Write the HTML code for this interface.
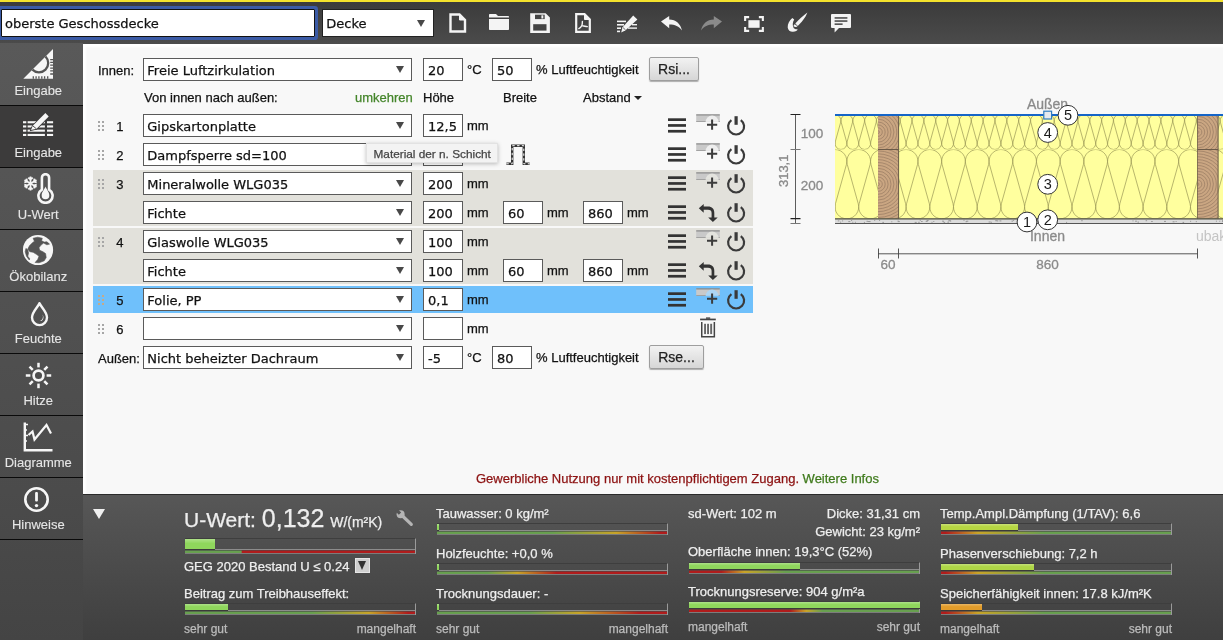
<!DOCTYPE html>
<html lang="de">
<head>
<meta charset="utf-8">
<title>U-Wert Rechner</title>
<style>
*{box-sizing:border-box;}
html,body{margin:0;padding:0;}
body{width:1223px;height:640px;overflow:hidden;position:relative;background:#f8f8f8;font-family:"Liberation Sans",sans-serif;font-size:13px;color:#111;}
.abs,.sel,.num,.lbl,.btn,.bl,.bs,.sitem,.rowbg,svg{position:absolute;}
#app{-webkit-text-stroke:0.250px;position:absolute;left:0;top:0;width:1223px;height:640px;overflow:hidden;will-change:transform;}
#yellow{left:0;top:0;width:1223px;height:2px;background:#f4e22c;}
#topbar{left:0;top:2px;width:1223px;height:42px;background:linear-gradient(#3b3b3b,#4b4b4b);}
.dv{font-family:"DejaVu Sans","Liberation Sans",sans-serif;}
#title{left:1px;top:9px;width:314px;height:28px;background:#fff;border:1px solid #111;box-shadow:0 0 0 3px #3b5ba6;border-radius:1px;}
#title span{position:absolute;left:3px;top:5px;font-size:13px;line-height:17px;color:#111;}
.sel{background:#fff;border:1px solid #5a5a5a;height:23px;width:269px;left:143px;font-family:"DejaVu Sans","Liberation Sans",sans-serif;font-size:13px;line-height:23px;padding-left:3.300px;color:#111;white-space:nowrap;overflow:hidden;}
.sel i{position:absolute;right:7.5px;top:7px;width:0;height:0;border-left:4.300px solid transparent;border-right:4.300px solid transparent;border-top:7.600px solid #484848;}
.num{background:#fff;border:1px solid #5a5a5a;height:23px;width:40px;font-family:"DejaVu Sans","Liberation Sans",sans-serif;font-size:13px;line-height:23px;padding-left:4px;color:#111;white-space:nowrap;}
.lbl{font-size:13px;line-height:15px;white-space:nowrap;color:#111;}
#side{left:0;top:43px;width:83px;height:597px;background:linear-gradient(#595959,#4b4b4b 75%,#444);}
.sitem{left:0;width:83px;height:63px;background:transparent;border-bottom:1px solid #0a0a0a;color:#e6e6e6;-webkit-text-stroke:0.100px;text-align:center;font-size:13px;}
.sitem.act{background:#3c3b3b;}
.sitem span{position:absolute;left:0;width:76.500px;top:40px;line-height:16px;}
.rowbg{left:93px;width:660px;}
.btn{height:23.500px;border:1px solid #9e9e9e;border-radius:2px;background:linear-gradient(#f2f2f2,#d6d6d6);font-size:14px;line-height:22px;text-align:center;color:#222;box-shadow:0 1px 1px rgba(0,0,0,.3);}
#bottom{left:83px;top:494px;width:1140px;height:146px;background:linear-gradient(#575757,#3f3f3f);border-top:1px solid #2a2a2a;}
.bl{font-size:13px;color:#eee;white-space:nowrap;line-height:16px;}
.bs{font-size:12px;color:#bbb;white-space:nowrap;line-height:14px;}
.bar{position:absolute;border-top:1px solid #3e3e3e;border-right:1px solid #9a9a9a;}
.bar b{position:absolute;left:0;top:0;display:block;border-bottom:1px solid #3a3a3a;box-sizing:content-box;background-image:linear-gradient(rgba(255,255,255,.28),rgba(255,255,255,0) 45%);}
.bar u{position:absolute;left:0;right:0;bottom:1px;height:3px;display:block;}
.bar s{position:absolute;left:0;right:0;bottom:4px;height:1px;background:#8c8c8c;display:block;}
.bar em{position:absolute;left:0;right:0;bottom:0;height:1px;background:#7c7c7c;display:block;}
</style>
</head>
<body>
<div id="app">
<div id="yellow" class="abs"></div>
<div id="topbar" class="abs"></div>
<div class="abs" style="left:83px;top:44px;width:1140px;height:450px;box-shadow:inset 3px 3px 2px #fff"></div>
<div id="title" class="abs dv"><span>oberste Geschossdecke</span></div>
<div class="sel" style="left:322px;top:9px;width:112px;height:28px;line-height:27px;border-color:#222;">Decke<i style="top:9.500px;right:8px"></i></div>
<svg style="left:449px;top:13px" width="18" height="20" viewBox="0 0 18 20" ><path d="M1.5 1.5H10.5L16 7V18.5H1.5Z" fill="none" stroke="#f4f4f4" stroke-width="2.4" stroke-linejoin="miter"/><path d="M10.500 1.500V7H16Z" fill="#f4f4f4" stroke="#f4f4f4" stroke-width="1"/></svg>
<svg style="left:489px;top:14px" width="20" height="16" viewBox="0 0 20 16" ><path d="M0 0.8Q0 0 .8 0H7L9 2H19.2Q20 2 20 2.8V3.6H0Z" fill="#f4f4f4"/><path d="M0 5H20V15.2Q20 16 19.2 16H.8Q0 16 0 15.2Z" fill="#f4f4f4"/></svg>
<svg style="left:530px;top:13px" width="20" height="20" viewBox="0 0 20 20" ><path d="M0.200 0.300H15.600L19.900 4.600V19.900H0.200Z" fill="#f4f4f4"/><rect x="5" y="1.700" width="9.700" height="4.400" fill="#454545"/><rect x="11.400" y="2.300" width="1.900" height="3.200" fill="#f4f4f4"/><rect x="3.200" y="11.200" width="13.300" height="6.400" fill="#454545"/></svg>
<svg style="left:575px;top:13px" width="16" height="20" viewBox="0 0 16 20" ><path d="M1.2 1.2H9.5L14.8 6.5V18.8H1.2Z" fill="none" stroke="#f4f4f4" stroke-width="2.2"/><path d="M9.500 1.200V6.500H14.800Z" fill="#f4f4f4" stroke="#f4f4f4" stroke-width="1"/><path d="M7.400 8.400C7.400 10.500 7.200 11.500 6.800 12.600M6.800 12.600C6 14 5 15 3.800 15.600M6.800 12.600C8.500 13 10.500 13.300 12.300 13.600" fill="none" stroke="#f4f4f4" stroke-width="1.400" stroke-linecap="round"/></svg>
<svg style="left:616px;top:15px" width="22" height="18" viewBox="0 0 22 18" ><g fill="#f4f4f4"><rect x="1" y="5.6" width="9" height="1.6"/><rect x="1" y="9" width="7" height="1.6"/><rect x="1" y="12.4" width="4" height="1.6"/><rect x="1" y="15.6" width="3" height="1.6"/><rect x="12" y="12.4" width="9" height="1.4"/><rect x="16" y="9" width="5" height="1.4"/><path d="M17.2 0.4L21.4 4.4L9.6 15.2L5.2 17.4L6.4 12.4Z"/></g><path d="M7 12.6L9.6 15" stroke="#444" stroke-width=".8"/></svg>
<svg style="left:661px;top:16px" width="21" height="15" viewBox="0 0 21 15" ><path d="M0 5.6L8.2 0V3.4C15 3.6 19.6 7.6 21 14.6C18 10.4 14 8.6 8.2 8.6V12.2Z" fill="#f4f4f4"/></svg>
<svg style="left:701px;top:16px" width="21" height="15" viewBox="0 0 21 15" ><path transform="translate(21,0) scale(-1,1)" d="M0 5.6L8.2 0V3.4C15 3.6 19.6 7.6 21 14.6C18 10.4 14 8.6 8.2 8.6V12.2Z" fill="#8a8a8a"/></svg>
<svg style="left:744px;top:16px" width="20" height="16" viewBox="0 0 21 16" preserveAspectRatio="none"><rect x="4.6" y="4.2" width="11.8" height="7.6" fill="#f4f4f4"/><path d="M1.2 5V1.2H5.4M15.6 1.2H19.8V5M19.8 11V14.8H15.6M5.4 14.8H1.2V11" fill="none" stroke="#f4f4f4" stroke-width="2.2"/></svg>
<svg style="left:787px;top:12px" width="21" height="21" viewBox="0 0 21 21" ><path d="M20.400 0.600C16.500 3.500 11.200 8.300 8.300 11.500L10.800 13.900C14.400 10.800 18.600 5.400 20.400 0.600Z" fill="#f4f4f4"/><path d="M7.800 12.200C6.800 12.600 6.400 13.600 6.800 14.600C8.400 15.200 10 14.800 10.400 14.200Z" fill="#f4f4f4"/><path d="M5.300 6.100C2.500 8.500 0.500 12 0.700 15.500C1 18.500 3.500 20 6 19.800C8.500 19.600 10.500 18.500 10.600 17.200C9 17.600 7 16.800 6.300 15.200C5.400 13 5.600 10 7.200 7.600Z" fill="#f4f4f4"/></svg>
<svg style="left:831px;top:14px" width="20" height="19" viewBox="0 0 20 19" ><path d="M1 0H19Q20 0 20 1V13Q20 14 19 14H8L3.6 18.6V14H1Q0 14 0 13V1Q0 0 1 0Z" fill="#f4f4f4"/><g fill="#444"><rect x="3.6" y="3.2" width="12.8" height="1.5"/><rect x="3.6" y="6.3" width="12.8" height="1.5"/><rect x="3.6" y="9.4" width="8" height="1.5"/></g></svg>
<div id="side" class="abs"></div>
<div class="sitem" style="top:43px;height:63px"><div class="abs" style="left:0;top:0px"><svg style="left:23px;top:6px" width="31" height="31" viewBox="0 0 31 31" ><path d="M30 0V29.700H0.300Z" fill="#f6f6f6"/><path d="M9.400 20.600A9.260 9.260 0 0 0 22.500 7.500" fill="none" stroke="#555" stroke-width="2.300"/><g stroke="#555" stroke-width="1.300"><path d="M27.200 10.600H30M27.200 13.400H30M27.200 16.200H30M27.200 19.100H30M27.200 21.900H30M27.200 25H30"/><path d="M10.300 27.200V29.700M13.100 27.200V29.700M15.900 27.200V29.700M18.800 27.200V29.700M21.600 27.200V29.700M24.700 27.200V29.700"/></g></svg><span>Eingabe</span></div></div>
<div class="sitem act" style="top:106px;height:62px"><div class="abs" style="left:0;top:-1px"><svg style="left:22px;top:7px" width="32" height="25" viewBox="0 0 32 25" ><g fill="#f6f6f6"><rect x="1" y="9.2" width="3.300" height="2.100"/><rect x="5.600" y="9.2" width="17.300" height="2.100"/><rect x="25" y="9.2" width="6.100" height="2.100"/><rect x="1" y="13.4" width="3.300" height="2.100"/><rect x="5.600" y="13.4" width="17.300" height="2.100"/><rect x="25" y="13.4" width="6.100" height="2.100"/><rect x="1" y="17.6" width="3.300" height="2.100"/><rect x="5.600" y="17.6" width="17.300" height="2.100"/><rect x="25" y="17.6" width="6.100" height="2.100"/><rect x="1" y="21.9" width="3.300" height="2.100"/><rect x="5.600" y="21.9" width="17.300" height="2.100"/><rect x="25" y="21.9" width="6.100" height="2.100"/><path d="M23.400 1.100L26.700 4.400L14.650 16.700L9 18.100L10.800 13.700Z" stroke="#3c3b3b" stroke-width="1.600"/><path d="M23.400 1.100L26.700 4.400L14.650 16.700L9 18.100L10.800 13.700Z"/></g><path d="M11 14L14.400 16.800" stroke="#3c3b3b" stroke-width=".9" fill="none"/></svg><span>Eingabe</span></div></div>
<div class="sitem" style="top:168px;height:62px"><div class="abs" style="left:0;top:-1px"><svg style="left:23px;top:9px" width="15" height="15" viewBox="0 0 15 15" ><g transform="rotate(0 7.5 7.5)"><path d="M7.5 0.6V7.5M5.3 1.6L7.5 3.6L9.7 1.6" fill="none" stroke="#f6f6f6" stroke-width="1.800"/></g><g transform="rotate(60 7.5 7.5)"><path d="M7.5 0.6V7.5M5.3 1.6L7.5 3.6L9.7 1.6" fill="none" stroke="#f6f6f6" stroke-width="1.800"/></g><g transform="rotate(120 7.5 7.5)"><path d="M7.5 0.6V7.5M5.3 1.6L7.5 3.6L9.7 1.6" fill="none" stroke="#f6f6f6" stroke-width="1.800"/></g><g transform="rotate(180 7.5 7.5)"><path d="M7.5 0.6V7.5M5.3 1.6L7.5 3.6L9.7 1.6" fill="none" stroke="#f6f6f6" stroke-width="1.800"/></g><g transform="rotate(240 7.5 7.5)"><path d="M7.5 0.6V7.5M5.3 1.6L7.5 3.6L9.7 1.6" fill="none" stroke="#f6f6f6" stroke-width="1.800"/></g><g transform="rotate(300 7.5 7.5)"><path d="M7.5 0.6V7.5M5.3 1.6L7.5 3.6L9.7 1.6" fill="none" stroke="#f6f6f6" stroke-width="1.800"/></g></svg><svg style="left:37px;top:6px" width="17" height="31" viewBox="0 0 17 31" ><path d="M4.900 4.800A3.600 3.600 0 0 1 12.100 4.800V16.600A7.100 7.100 0 1 1 4.900 16.600Z" fill="none" stroke="#f6f6f6" stroke-width="2.600"/><path d="M8.500 13.500C9.300 16.500 12.300 18.500 12.300 22.500A3.800 3.800 0 0 1 4.700 22.500C4.700 18.500 7.700 16.500 8.500 13.500Z" fill="#f6f6f6"/></svg><span>U-Wert</span></div></div>
<div class="sitem" style="top:230px;height:62px"><div class="abs" style="left:0;top:-1px"><svg style="left:23px;top:5px" width="31" height="33" viewBox="0 0 31 33" ><circle cx="15" cy="16" r="15.100" fill="#f6f6f6"/><path d="M10.1 4.2L14.7 3.2L19.3 4.2L18.6 6.8L21.2 8.1L23.9 7.8L26.5 10.1L23.9 10.8L20.6 9.1L18.0 11.1L16.0 13.7L16.7 16.3L19.9 17.7L22.6 19.6L23.2 23.6L21.2 26.8L16.0 28.8L12.1 28.5L14.7 25.5L16.0 22.2L13.4 20.3L10.1 18.3L6.8 17.7L4.8 15.0L6.5 11.7L9.1 9.1L11.4 7.2ZM2.9 14.4L4.8 15.7L5.5 19.0L4.8 22.2L6.8 24.9L6.2 25.9L3.5 22.2L2.2 17.7Z" fill="#545454" stroke="#545454" stroke-width=".6" stroke-linejoin="round"/></svg><span>Ökobilanz</span></div></div>
<div class="sitem" style="top:292px;height:62px"><div class="abs" style="left:0;top:-1px"><svg style="left:30px;top:10px" width="19" height="26" viewBox="0 0 19 26" ><path d="M9.5 2.2C7.6 6.6 2 10.800 2 16.600A7.500 7.500 0 0 0 17 16.600C17 10.800 11.400 6.600 9.500 2.200Z" fill="none" stroke="#f6f6f6" stroke-width="2.400" stroke-linejoin="round"/><path d="M12.6 13.500C13.600 16.500 12.600 19 10 20C12.800 20.400 14.600 17 12.600 13.500Z" fill="#f6f6f6"/></svg><span>Feuchte</span></div></div>
<div class="sitem" style="top:354px;height:62px"><div class="abs" style="left:0;top:-1px"><svg style="left:25px;top:9px" width="27" height="27" viewBox="0 0 27 27" ><circle cx="13.500" cy="13.500" r="4.900" fill="none" stroke="#f6f6f6" stroke-width="2.700"/><path transform="rotate(0 13.5 13.5)" d="M13.5 0.800V5.400" stroke="#f6f6f6" stroke-width="2.500" fill="none"/><path transform="rotate(45 13.5 13.5)" d="M13.5 0.800V5.400" stroke="#f6f6f6" stroke-width="2.500" fill="none"/><path transform="rotate(90 13.5 13.5)" d="M13.5 0.800V5.400" stroke="#f6f6f6" stroke-width="2.500" fill="none"/><path transform="rotate(135 13.5 13.5)" d="M13.5 0.800V5.400" stroke="#f6f6f6" stroke-width="2.500" fill="none"/><path transform="rotate(180 13.5 13.5)" d="M13.5 0.800V5.400" stroke="#f6f6f6" stroke-width="2.500" fill="none"/><path transform="rotate(225 13.5 13.5)" d="M13.5 0.800V5.400" stroke="#f6f6f6" stroke-width="2.500" fill="none"/><path transform="rotate(270 13.5 13.5)" d="M13.5 0.800V5.400" stroke="#f6f6f6" stroke-width="2.500" fill="none"/><path transform="rotate(315 13.5 13.5)" d="M13.5 0.800V5.400" stroke="#f6f6f6" stroke-width="2.500" fill="none"/></svg><span>Hitze</span></div></div>
<div class="sitem" style="top:416px;height:62px"><div class="abs" style="left:0;top:-1px"><svg style="left:23px;top:7px" width="30" height="30" viewBox="0 0 30 30" ><path d="M1.800 0.500V28.200H29.500" fill="none" stroke="#f6f6f6" stroke-width="2.400"/><path d="M1.800 2.500H5M1.800 8H4M1.800 13.500H5M1.800 19H4" stroke="#f6f6f6" stroke-width="1.400"/><path d="M5.500 13L9.500 9.500L11.500 17.500L23.500 3L28 11.500" fill="none" stroke="#f6f6f6" stroke-width="2.200" stroke-linejoin="miter"/></svg><span>Diagramme</span></div></div>
<div class="sitem" style="top:478px;height:62px"><div class="abs" style="left:0;top:-1px"><svg style="left:23px;top:9px" width="27" height="27" viewBox="0 0 27 27" ><circle cx="13.500" cy="13.500" r="11.200" fill="none" stroke="#f6f6f6" stroke-width="2.600"/><rect x="12.100" y="6" width="2.800" height="9.500" rx="1" fill="#f6f6f6"/><circle cx="13.500" cy="19.600" r="1.700" fill="#f6f6f6"/></svg><span>Hinweise</span></div></div>
<div class="rowbg" style="top:170px;height:56px;background:#e2e1db"></div>
<div class="rowbg" style="top:228px;height:56px;background:#e2e1db"></div>
<div class="rowbg" style="top:286px;height:27px;background:#6fc0fb"></div>
<div class="lbl" style="left:98px;top:63.0px;">Innen:</div>
<div class="sel" style="top:58.0px">Freie Luftzirkulation<i></i></div>
<div class="num" style="left:423px;top:58.0px">20</div>
<div class="lbl" style="left:467px;top:62.0px;">°C</div>
<div class="num" style="left:492px;top:58.0px">50</div>
<div class="lbl" style="left:536px;top:62.0px;">% Luftfeuchtigkeit</div>
<div class="btn" style="left:649px;top:57.0px;width:50px">Rsi...</div>
<div class="lbl" style="left:144px;top:90.0px;">Von innen nach außen:</div>
<div class="lbl" style="left:355px;top:90.0px;color:#44852a">umkehren</div>
<div class="lbl" style="left:423px;top:90.0px;">Höhe</div>
<div class="lbl" style="left:503px;top:90.0px;">Breite</div>
<div class="lbl" style="left:583px;top:90.0px;">Abstand</div>
<div class="abs" style="left:634px;top:96px;width:0;height:0;border-left:4px solid transparent;border-right:4px solid transparent;border-top:4px solid #222"></div>
<svg style="left:98px;top:121.0px" width="6" height="10" viewBox="0 0 6 10" ><rect x="0" y="0" width="2" height="2" fill="#a6a6a6"/><rect x="0" y="4" width="2" height="2" fill="#a6a6a6"/><rect x="0" y="8" width="2" height="2" fill="#a6a6a6"/><rect x="4" y="0" width="2" height="2" fill="#a6a6a6"/><rect x="4" y="4" width="2" height="2" fill="#a6a6a6"/><rect x="4" y="8" width="2" height="2" fill="#a6a6a6"/></svg>
<div class="lbl" style="left:116.200px;top:119.0px;">1</div>
<div class="sel" style="top:114.0px">Gipskartonplatte<i></i></div>
<div class="num" style="left:423px;top:114.0px">12,5</div>
<div class="lbl" style="left:467px;top:118.0px;">mm</div>
<svg style="left:668px;top:118.0px" width="18" height="15" viewBox="0 0 18 15" ><rect x="0" y="0.300" width="18" height="2.700" fill="#333"/><rect x="0" y="6.100" width="18" height="2.700" fill="#333"/><rect x="0" y="11.900" width="18" height="2.700" fill="#333"/></svg>
<svg style="left:696px;top:113.5px" width="25" height="22" viewBox="0 0 25 22" ><rect x="0.200" y="0.600" width="23.600" height="7.300" fill="#c9c9c9"/><rect x="0.200" y="0.400" width="23.600" height="1" fill="#7c7c7c"/><rect x="0.200" y="7.300" width="23.600" height=".7" fill="#909090"/><path d="M9.600 8.100A6.500 6.500 0 0 1 22.600 8.100Z" fill="#f4f4f4" opacity=".85"/><path d="M16.100 5.500V15.800M11 10.650H21.200" stroke="#3c3c3c" stroke-width="2" fill="none"/></svg>
<svg style="left:726px;top:114.5px" width="21" height="23" viewBox="0 0 21 23" ><path d="M5.400 5.030A8 8 0 1 0 14.800 5.030" fill="none" stroke="#3a3a3a" stroke-width="2.200"/><rect x="8.500" y="1.200" width="3.200" height="8.600" fill="#3a3a3a"/></svg>
<svg style="left:98px;top:150.0px" width="6" height="10" viewBox="0 0 6 10" ><rect x="0" y="0" width="2" height="2" fill="#a6a6a6"/><rect x="0" y="4" width="2" height="2" fill="#a6a6a6"/><rect x="0" y="8" width="2" height="2" fill="#a6a6a6"/><rect x="4" y="0" width="2" height="2" fill="#a6a6a6"/><rect x="4" y="4" width="2" height="2" fill="#a6a6a6"/><rect x="4" y="8" width="2" height="2" fill="#a6a6a6"/></svg>
<div class="lbl" style="left:116.200px;top:148.0px;">2</div>
<div class="sel" style="top:143.0px">Dampfsperre sd=100<i></i></div>
<div class="num" style="left:423px;top:143.0px">0,2</div>
<svg style="left:668px;top:147.0px" width="18" height="15" viewBox="0 0 18 15" ><rect x="0" y="0.300" width="18" height="2.700" fill="#333"/><rect x="0" y="6.100" width="18" height="2.700" fill="#333"/><rect x="0" y="11.900" width="18" height="2.700" fill="#333"/></svg>
<svg style="left:696px;top:142.5px" width="25" height="22" viewBox="0 0 25 22" ><rect x="0.200" y="0.600" width="23.600" height="7.300" fill="#c9c9c9"/><rect x="0.200" y="0.400" width="23.600" height="1" fill="#7c7c7c"/><rect x="0.200" y="7.300" width="23.600" height=".7" fill="#909090"/><path d="M9.600 8.100A6.500 6.500 0 0 1 22.600 8.100Z" fill="#f4f4f4" opacity=".85"/><path d="M16.100 5.500V15.800M11 10.650H21.200" stroke="#3c3c3c" stroke-width="2" fill="none"/></svg>
<svg style="left:726px;top:143.5px" width="21" height="23" viewBox="0 0 21 23" ><path d="M5.400 5.030A8 8 0 1 0 14.800 5.030" fill="none" stroke="#3a3a3a" stroke-width="2.200"/><rect x="8.500" y="1.200" width="3.200" height="8.600" fill="#3a3a3a"/></svg>
<svg style="left:98px;top:179.0px" width="6" height="10" viewBox="0 0 6 10" ><rect x="0" y="0" width="2" height="2" fill="#a6a6a6"/><rect x="0" y="4" width="2" height="2" fill="#a6a6a6"/><rect x="0" y="8" width="2" height="2" fill="#a6a6a6"/><rect x="4" y="0" width="2" height="2" fill="#a6a6a6"/><rect x="4" y="4" width="2" height="2" fill="#a6a6a6"/><rect x="4" y="8" width="2" height="2" fill="#a6a6a6"/></svg>
<div class="lbl" style="left:116.200px;top:177.0px;">3</div>
<div class="sel" style="top:172.0px">Mineralwolle WLG035<i></i></div>
<div class="num" style="left:423px;top:172.0px">200</div>
<div class="lbl" style="left:467px;top:176.0px;">mm</div>
<svg style="left:668px;top:176.0px" width="18" height="15" viewBox="0 0 18 15" ><rect x="0" y="0.300" width="18" height="2.700" fill="#333"/><rect x="0" y="6.100" width="18" height="2.700" fill="#333"/><rect x="0" y="11.900" width="18" height="2.700" fill="#333"/></svg>
<svg style="left:696px;top:171.5px" width="25" height="22" viewBox="0 0 25 22" ><rect x="0.200" y="0.600" width="23.600" height="7.300" fill="#c9c9c9"/><rect x="0.200" y="0.400" width="23.600" height="1" fill="#7c7c7c"/><rect x="0.200" y="7.300" width="23.600" height=".7" fill="#909090"/><path d="M9.600 8.100A6.500 6.500 0 0 1 22.600 8.100Z" fill="#e8e7e2" opacity=".85"/><path d="M16.100 5.500V15.800M11 10.650H21.200" stroke="#3c3c3c" stroke-width="2" fill="none"/></svg>
<svg style="left:726px;top:172.5px" width="21" height="23" viewBox="0 0 21 23" ><path d="M5.400 5.030A8 8 0 1 0 14.800 5.030" fill="none" stroke="#3a3a3a" stroke-width="2.200"/><rect x="8.500" y="1.200" width="3.200" height="8.600" fill="#3a3a3a"/></svg>
<div class="sel" style="top:201.0px">Fichte<i></i></div>
<div class="num" style="left:423px;top:201.0px">200</div>
<div class="lbl" style="left:467px;top:205.0px;">mm</div>
<div class="num" style="left:503px;top:201.0px">60</div>
<div class="lbl" style="left:547px;top:205.0px;">mm</div>
<div class="num" style="left:583px;top:201.0px">860</div>
<div class="lbl" style="left:627px;top:205.0px;">mm</div>
<svg style="left:668px;top:205.0px" width="18" height="15" viewBox="0 0 18 15" ><rect x="0" y="0.300" width="18" height="2.700" fill="#333"/><rect x="0" y="6.100" width="18" height="2.700" fill="#333"/><rect x="0" y="11.900" width="18" height="2.700" fill="#333"/></svg>
<svg style="left:698px;top:203.0px" width="21" height="20" viewBox="0 0 21 20" ><path d="M0.800 5.300L5.700 0.900V3.600H10C14 3.600 16.300 6 16.300 10V14.400H19.700L14.900 19L10.200 14.400H13.600V10C13.600 8 12.400 6.800 10 6.800H5.700V9.700Z" fill="#333"/></svg>
<svg style="left:726px;top:201.5px" width="21" height="23" viewBox="0 0 21 23" ><path d="M5.400 5.030A8 8 0 1 0 14.800 5.030" fill="none" stroke="#3a3a3a" stroke-width="2.200"/><rect x="8.500" y="1.200" width="3.200" height="8.600" fill="#3a3a3a"/></svg>
<svg style="left:98px;top:237.0px" width="6" height="10" viewBox="0 0 6 10" ><rect x="0" y="0" width="2" height="2" fill="#a6a6a6"/><rect x="0" y="4" width="2" height="2" fill="#a6a6a6"/><rect x="0" y="8" width="2" height="2" fill="#a6a6a6"/><rect x="4" y="0" width="2" height="2" fill="#a6a6a6"/><rect x="4" y="4" width="2" height="2" fill="#a6a6a6"/><rect x="4" y="8" width="2" height="2" fill="#a6a6a6"/></svg>
<div class="lbl" style="left:116.200px;top:235.0px;">4</div>
<div class="sel" style="top:230.0px">Glaswolle WLG035<i></i></div>
<div class="num" style="left:423px;top:230.0px">100</div>
<div class="lbl" style="left:467px;top:234.0px;">mm</div>
<svg style="left:668px;top:234.0px" width="18" height="15" viewBox="0 0 18 15" ><rect x="0" y="0.300" width="18" height="2.700" fill="#333"/><rect x="0" y="6.100" width="18" height="2.700" fill="#333"/><rect x="0" y="11.900" width="18" height="2.700" fill="#333"/></svg>
<svg style="left:696px;top:229.5px" width="25" height="22" viewBox="0 0 25 22" ><rect x="0.200" y="0.600" width="23.600" height="7.300" fill="#c9c9c9"/><rect x="0.200" y="0.400" width="23.600" height="1" fill="#7c7c7c"/><rect x="0.200" y="7.300" width="23.600" height=".7" fill="#909090"/><path d="M9.600 8.100A6.500 6.500 0 0 1 22.600 8.100Z" fill="#e8e7e2" opacity=".85"/><path d="M16.100 5.500V15.800M11 10.650H21.200" stroke="#3c3c3c" stroke-width="2" fill="none"/></svg>
<svg style="left:726px;top:230.5px" width="21" height="23" viewBox="0 0 21 23" ><path d="M5.400 5.030A8 8 0 1 0 14.800 5.030" fill="none" stroke="#3a3a3a" stroke-width="2.200"/><rect x="8.500" y="1.200" width="3.200" height="8.600" fill="#3a3a3a"/></svg>
<div class="sel" style="top:259.0px">Fichte<i></i></div>
<div class="num" style="left:423px;top:259.0px">100</div>
<div class="lbl" style="left:467px;top:263.0px;">mm</div>
<div class="num" style="left:503px;top:259.0px">60</div>
<div class="lbl" style="left:547px;top:263.0px;">mm</div>
<div class="num" style="left:583px;top:259.0px">860</div>
<div class="lbl" style="left:627px;top:263.0px;">mm</div>
<svg style="left:668px;top:263.0px" width="18" height="15" viewBox="0 0 18 15" ><rect x="0" y="0.300" width="18" height="2.700" fill="#333"/><rect x="0" y="6.100" width="18" height="2.700" fill="#333"/><rect x="0" y="11.900" width="18" height="2.700" fill="#333"/></svg>
<svg style="left:698px;top:261.0px" width="21" height="20" viewBox="0 0 21 20" ><path d="M0.800 5.300L5.700 0.900V3.600H10C14 3.600 16.300 6 16.300 10V14.400H19.700L14.900 19L10.200 14.400H13.600V10C13.600 8 12.400 6.800 10 6.800H5.700V9.700Z" fill="#333"/></svg>
<svg style="left:726px;top:259.5px" width="21" height="23" viewBox="0 0 21 23" ><path d="M5.400 5.030A8 8 0 1 0 14.800 5.030" fill="none" stroke="#3a3a3a" stroke-width="2.200"/><rect x="8.500" y="1.200" width="3.200" height="8.600" fill="#3a3a3a"/></svg>
<svg style="left:98px;top:295.0px" width="6" height="10" viewBox="0 0 6 10" ><rect x="0" y="0" width="2" height="2" fill="#c6aa88"/><rect x="0" y="4" width="2" height="2" fill="#c6aa88"/><rect x="0" y="8" width="2" height="2" fill="#c6aa88"/><rect x="4" y="0" width="2" height="2" fill="#c6aa88"/><rect x="4" y="4" width="2" height="2" fill="#c6aa88"/><rect x="4" y="8" width="2" height="2" fill="#c6aa88"/></svg>
<div class="lbl" style="left:116.200px;top:293.0px;">5</div>
<div class="sel" style="top:288.0px">Folie, PP<i></i></div>
<div class="num" style="left:423px;top:288.0px">0,1</div>
<div class="lbl" style="left:467px;top:292.0px;">mm</div>
<svg style="left:668px;top:292.0px" width="18" height="15" viewBox="0 0 18 15" ><rect x="0" y="0.300" width="18" height="2.700" fill="#333"/><rect x="0" y="6.100" width="18" height="2.700" fill="#333"/><rect x="0" y="11.900" width="18" height="2.700" fill="#333"/></svg>
<svg style="left:696px;top:287.5px" width="25" height="22" viewBox="0 0 25 22" ><rect x="0.200" y="0.600" width="23.600" height="7.300" fill="#c9c9c9"/><rect x="0.200" y="0.400" width="23.600" height="1" fill="#7c7c7c"/><rect x="0.200" y="7.300" width="23.600" height=".7" fill="#909090"/><path d="M9.600 8.100A6.500 6.500 0 0 1 22.600 8.100Z" fill="#a8d8fc" opacity=".85"/><path d="M16.100 5.500V15.800M11 10.650H21.200" stroke="#3c3c3c" stroke-width="2" fill="none"/></svg>
<svg style="left:726px;top:288.5px" width="21" height="23" viewBox="0 0 21 23" ><path d="M5.400 5.030A8 8 0 1 0 14.800 5.030" fill="none" stroke="#3a3a3a" stroke-width="2.200"/><rect x="8.500" y="1.200" width="3.200" height="8.600" fill="#3a3a3a"/></svg>
<svg style="left:98px;top:324.0px" width="6" height="10" viewBox="0 0 6 10" ><rect x="0" y="0" width="2" height="2" fill="#a6a6a6"/><rect x="0" y="4" width="2" height="2" fill="#a6a6a6"/><rect x="0" y="8" width="2" height="2" fill="#a6a6a6"/><rect x="4" y="0" width="2" height="2" fill="#a6a6a6"/><rect x="4" y="4" width="2" height="2" fill="#a6a6a6"/><rect x="4" y="8" width="2" height="2" fill="#a6a6a6"/></svg>
<div class="lbl" style="left:116.200px;top:322.0px;">6</div>
<div class="sel" style="top:317.0px"><i></i></div>
<div class="num" style="left:423px;top:317.0px"></div>
<div class="lbl" style="left:467px;top:321.0px;">mm</div>
<svg style="left:699px;top:316.5px" width="18" height="22" viewBox="0 0 18 22" ><rect x="1.100" y="1.600" width="15.700" height="1.700" fill="#444"/><rect x="7" y="0.400" width="4.200" height="1.400" fill="#444"/><path d="M2.750 5.100V19.650H15.350V5.100" fill="none" stroke="#444" stroke-width="1.500"/><g fill="#666"><rect x="5.100" y="6.800" width="1.900" height="10.300"/><rect x="8.100" y="6.800" width="1.900" height="10.300"/><rect x="11.200" y="6.800" width="1.900" height="10.300"/></g></svg>
<svg style="left:506px;top:143.5px" width="24" height="22" viewBox="0 0 24 22" ><path d="M0.400 19.800H6.200V1.700H17.800V19.800H23.600" fill="none" stroke="#333" stroke-width="2.400"/><path d="M0.400 19.800H6.200V1.700H17.800V19.800H23.600" fill="none" stroke="#fff" stroke-width="1" stroke-dasharray="2.400 2.400"/></svg>
<div class="abs" style="left:366px;top:143px;width:132px;height:20px;background:#f3f3f3;border:1px solid #e2e2e2;box-shadow:0 1px 4px rgba(0,0,0,.25);font-size:11.800px;line-height:20px;padding-left:6.500px;color:#444;white-space:nowrap">Material der n. Schicht</div>
<div class="lbl" style="left:98px;top:351.0px;">Außen:</div>
<div class="sel" style="top:346.0px">Nicht beheizter Dachraum<i></i></div>
<div class="num" style="left:423px;top:346.0px">-5</div>
<div class="lbl" style="left:467px;top:350.0px;">°C</div>
<div class="num" style="left:492px;top:346.0px">80</div>
<div class="lbl" style="left:536px;top:350.0px;">% Luftfeuchtigkeit</div>
<div class="btn" style="left:649px;top:345.0px;width:55px">Rse...</div>
<div class="lbl" style="left:476px;top:471px;color:#8c1212">Gewerbliche Nutzung nur mit kostenpflichtigem Zugang. <span style="color:#3f7a1c">Weitere Infos</span></div>
<svg style="left:770px;top:88px" width="453" height="192" viewBox="770 88 453 192" font-family="Liberation Sans, sans-serif" stroke-width=".3"><defs><clipPath id="c1"><rect x="835" y="114.6" width="388" height="34.9"/></clipPath><clipPath id="c2"><rect x="835" y="149.5" width="388" height="69.3"/></clipPath></defs><rect x="835" y="114.6" width="388" height="104.20000000000002" fill="#ffff9e"/><path clip-path="url(#c1)" d="M817.44 122.10A5.92 5.92 0 1 1 828.86 122.10L823.36 142.00A5.92 5.92 0 1 0 834.79 142.00L829.29 122.10A5.92 5.92 0 1 1 840.71 122.10L835.21 142.00A5.92 5.92 0 1 0 846.64 142.00L841.14 122.10A5.92 5.92 0 1 1 852.56 122.10L847.06 142.00A5.92 5.92 0 1 0 858.49 142.00L852.99 122.10A5.92 5.92 0 1 1 864.41 122.10L858.91 142.00A5.92 5.92 0 1 0 870.34 142.00L864.84 122.10A5.92 5.92 0 1 1 876.26 122.10L870.76 142.00A5.92 5.92 0 1 0 882.19 142.00L876.69 122.10A5.92 5.92 0 1 1 888.11 122.10L882.61 142.00A5.92 5.92 0 1 0 894.04 142.00L888.54 122.10A5.92 5.92 0 1 1 899.96 122.10L894.46 142.00A5.92 5.92 0 1 0 905.89 142.00L900.39 122.10A5.92 5.92 0 1 1 911.81 122.10L906.31 142.00A5.92 5.92 0 1 0 917.74 142.00L912.24 122.10A5.92 5.92 0 1 1 923.66 122.10L918.16 142.00A5.92 5.92 0 1 0 929.59 142.00L924.09 122.10A5.92 5.92 0 1 1 935.51 122.10L930.01 142.00A5.92 5.92 0 1 0 941.44 142.00L935.94 122.10A5.92 5.92 0 1 1 947.36 122.10L941.86 142.00A5.92 5.92 0 1 0 953.29 142.00L947.79 122.10A5.92 5.92 0 1 1 959.21 122.10L953.71 142.00A5.92 5.92 0 1 0 965.14 142.00L959.64 122.10A5.92 5.92 0 1 1 971.06 122.10L965.56 142.00A5.92 5.92 0 1 0 976.99 142.00L971.49 122.10A5.92 5.92 0 1 1 982.91 122.10L977.41 142.00A5.92 5.92 0 1 0 988.84 142.00L983.34 122.10A5.92 5.92 0 1 1 994.76 122.10L989.26 142.00A5.92 5.92 0 1 0 1000.69 142.00L995.19 122.10A5.92 5.92 0 1 1 1006.61 122.10L1001.11 142.00A5.92 5.92 0 1 0 1012.54 142.00L1007.04 122.10A5.92 5.92 0 1 1 1018.46 122.10L1012.96 142.00A5.92 5.92 0 1 0 1024.39 142.00L1018.89 122.10A5.92 5.92 0 1 1 1030.31 122.10L1024.81 142.00A5.92 5.92 0 1 0 1036.24 142.00L1030.74 122.10A5.92 5.92 0 1 1 1042.16 122.10L1036.66 142.00A5.92 5.92 0 1 0 1048.09 142.00L1042.59 122.10A5.92 5.92 0 1 1 1054.01 122.10L1048.51 142.00A5.92 5.92 0 1 0 1059.94 142.00L1054.44 122.10A5.92 5.92 0 1 1 1065.86 122.10L1060.36 142.00A5.92 5.92 0 1 0 1071.79 142.00L1066.29 122.10A5.92 5.92 0 1 1 1077.71 122.10L1072.21 142.00A5.92 5.92 0 1 0 1083.64 142.00L1078.14 122.10A5.92 5.92 0 1 1 1089.56 122.10L1084.06 142.00A5.92 5.92 0 1 0 1095.49 142.00L1089.99 122.10A5.92 5.92 0 1 1 1101.41 122.10L1095.91 142.00A5.92 5.92 0 1 0 1107.34 142.00L1101.84 122.10A5.92 5.92 0 1 1 1113.26 122.10L1107.76 142.00A5.92 5.92 0 1 0 1119.19 142.00L1113.69 122.10A5.92 5.92 0 1 1 1125.11 122.10L1119.61 142.00A5.92 5.92 0 1 0 1131.04 142.00L1125.54 122.10A5.92 5.92 0 1 1 1136.96 122.10L1131.46 142.00A5.92 5.92 0 1 0 1142.89 142.00L1137.39 122.10A5.92 5.92 0 1 1 1148.81 122.10L1143.31 142.00A5.92 5.92 0 1 0 1154.74 142.00L1149.24 122.10A5.92 5.92 0 1 1 1160.66 122.10L1155.16 142.00A5.92 5.92 0 1 0 1166.59 142.00L1161.09 122.10A5.92 5.92 0 1 1 1172.51 122.10L1167.01 142.00A5.92 5.92 0 1 0 1178.44 142.00L1172.94 122.10A5.92 5.92 0 1 1 1184.36 122.10L1178.86 142.00A5.92 5.92 0 1 0 1190.29 142.00L1184.79 122.10A5.92 5.92 0 1 1 1196.21 122.10L1190.71 142.00A5.92 5.92 0 1 0 1202.14 142.00L1196.64 122.10A5.92 5.92 0 1 1 1208.06 122.10L1202.56 142.00A5.92 5.92 0 1 0 1213.99 142.00L1208.49 122.10A5.92 5.92 0 1 1 1219.91 122.10L1214.41 142.00A5.92 5.92 0 1 0 1225.84 142.00L1220.34 122.10A5.92 5.92 0 1 1 1231.76 122.10L1226.26 142.00A5.92 5.92 0 1 0 1237.69 142.00L1232.19 122.10A5.92 5.92 0 1 1 1243.61 122.10L1238.11 142.00A5.92 5.92 0 1 0 1249.54 142.00L1244.04 122.10A5.92 5.92 0 1 1 1255.46 122.10L1249.96 142.00A5.92 5.92 0 1 0 1261.39 142.00L1255.89 122.10" fill="none" stroke="#9a9656" stroke-width=".7"/><path clip-path="url(#c2)" d="M799.89 164.54A11.85 11.85 0 1 1 822.71 164.54L811.74 203.76A11.85 11.85 0 1 0 834.56 203.76L823.59 164.54A11.85 11.85 0 1 1 846.41 164.54L835.44 203.76A11.85 11.85 0 1 0 858.26 203.76L847.29 164.54A11.85 11.85 0 1 1 870.11 164.54L859.14 203.76A11.85 11.85 0 1 0 881.96 203.76L870.99 164.54A11.85 11.85 0 1 1 893.81 164.54L882.84 203.76A11.85 11.85 0 1 0 905.66 203.76L894.69 164.54A11.85 11.85 0 1 1 917.51 164.54L906.54 203.76A11.85 11.85 0 1 0 929.36 203.76L918.39 164.54A11.85 11.85 0 1 1 941.21 164.54L930.24 203.76A11.85 11.85 0 1 0 953.06 203.76L942.09 164.54A11.85 11.85 0 1 1 964.91 164.54L953.94 203.76A11.85 11.85 0 1 0 976.76 203.76L965.79 164.54A11.85 11.85 0 1 1 988.61 164.54L977.64 203.76A11.85 11.85 0 1 0 1000.46 203.76L989.49 164.54A11.85 11.85 0 1 1 1012.31 164.54L1001.34 203.76A11.85 11.85 0 1 0 1024.16 203.76L1013.19 164.54A11.85 11.85 0 1 1 1036.01 164.54L1025.04 203.76A11.85 11.85 0 1 0 1047.86 203.76L1036.89 164.54A11.85 11.85 0 1 1 1059.71 164.54L1048.74 203.76A11.85 11.85 0 1 0 1071.56 203.76L1060.59 164.54A11.85 11.85 0 1 1 1083.41 164.54L1072.44 203.76A11.85 11.85 0 1 0 1095.26 203.76L1084.29 164.54A11.85 11.85 0 1 1 1107.11 164.54L1096.14 203.76A11.85 11.85 0 1 0 1118.96 203.76L1107.99 164.54A11.85 11.85 0 1 1 1130.81 164.54L1119.84 203.76A11.85 11.85 0 1 0 1142.66 203.76L1131.69 164.54A11.85 11.85 0 1 1 1154.51 164.54L1143.54 203.76A11.85 11.85 0 1 0 1166.36 203.76L1155.39 164.54A11.85 11.85 0 1 1 1178.21 164.54L1167.24 203.76A11.85 11.85 0 1 0 1190.06 203.76L1179.09 164.54A11.85 11.85 0 1 1 1201.91 164.54L1190.94 203.76A11.85 11.85 0 1 0 1213.76 203.76L1202.79 164.54A11.85 11.85 0 1 1 1225.61 164.54L1214.64 203.76A11.85 11.85 0 1 0 1237.46 203.76L1226.49 164.54A11.85 11.85 0 1 1 1249.31 164.54L1238.34 203.76A11.85 11.85 0 1 0 1261.16 203.76L1250.19 164.54A11.85 11.85 0 1 1 1273.01 164.54L1262.04 203.76A11.85 11.85 0 1 0 1284.86 203.76L1273.89 164.54A11.85 11.85 0 1 1 1296.71 164.54L1285.74 203.76A11.85 11.85 0 1 0 1308.56 203.76L1297.59 164.54" fill="none" stroke="#9a9656" stroke-width=".7"/><clipPath id="w878a"><rect x="878.0" y="114.6" width="20.6" height="34.900000000000006"/></clipPath><rect x="878.0" y="114.6" width="20.6" height="34.900000000000006" fill="#caa682"/><g clip-path="url(#w878a)" fill="none" stroke="#a4866a" stroke-width=".95"><circle cx="878.0" cy="132.1" r="1.4"/><circle cx="878.0" cy="132.1" r="4.3"/><circle cx="878.0" cy="132.1" r="7.2"/><circle cx="878.0" cy="132.1" r="10.1"/><circle cx="878.0" cy="132.1" r="13.0"/><circle cx="878.0" cy="132.1" r="15.9"/><circle cx="878.0" cy="132.1" r="18.8"/><circle cx="878.0" cy="132.1" r="21.7"/><circle cx="878.0" cy="132.1" r="24.6"/><circle cx="878.0" cy="132.1" r="27.5"/><circle cx="878.0" cy="132.1" r="30.4"/><circle cx="878.0" cy="132.1" r="33.3"/><circle cx="878.0" cy="132.1" r="36.2"/><circle cx="878.0" cy="132.1" r="39.1"/><circle cx="878.0" cy="132.1" r="42.0"/><circle cx="878.0" cy="132.1" r="44.9"/><circle cx="878.0" cy="132.1" r="47.8"/><circle cx="878.0" cy="132.1" r="50.7"/></g><clipPath id="w878b"><rect x="878.0" y="149.5" width="20.6" height="69.30000000000001"/></clipPath><rect x="878.0" y="149.5" width="20.6" height="69.30000000000001" fill="#caa682"/><g clip-path="url(#w878b)" fill="none" stroke="#a4866a" stroke-width=".95"><circle cx="878.0" cy="184.2" r="1.4"/><circle cx="878.0" cy="184.2" r="4.3"/><circle cx="878.0" cy="184.2" r="7.2"/><circle cx="878.0" cy="184.2" r="10.1"/><circle cx="878.0" cy="184.2" r="13.0"/><circle cx="878.0" cy="184.2" r="15.9"/><circle cx="878.0" cy="184.2" r="18.8"/><circle cx="878.0" cy="184.2" r="21.7"/><circle cx="878.0" cy="184.2" r="24.6"/><circle cx="878.0" cy="184.2" r="27.5"/><circle cx="878.0" cy="184.2" r="30.4"/><circle cx="878.0" cy="184.2" r="33.3"/><circle cx="878.0" cy="184.2" r="36.2"/><circle cx="878.0" cy="184.2" r="39.1"/><circle cx="878.0" cy="184.2" r="42.0"/><circle cx="878.0" cy="184.2" r="44.9"/><circle cx="878.0" cy="184.2" r="47.8"/><circle cx="878.0" cy="184.2" r="50.7"/></g><path d="M878.0 149.5H898.6" stroke="#6b5a48" stroke-width="1"/><path d="M898.6 114.6V218.8" stroke="#6b5a48" stroke-width="1"/><clipPath id="w1197a"><rect x="1197.5" y="114.6" width="20.6" height="34.900000000000006"/></clipPath><rect x="1197.5" y="114.6" width="20.6" height="34.900000000000006" fill="#caa682"/><g clip-path="url(#w1197a)" fill="none" stroke="#a4866a" stroke-width=".95"><circle cx="1197.5" cy="132.1" r="1.4"/><circle cx="1197.5" cy="132.1" r="4.3"/><circle cx="1197.5" cy="132.1" r="7.2"/><circle cx="1197.5" cy="132.1" r="10.1"/><circle cx="1197.5" cy="132.1" r="13.0"/><circle cx="1197.5" cy="132.1" r="15.9"/><circle cx="1197.5" cy="132.1" r="18.8"/><circle cx="1197.5" cy="132.1" r="21.7"/><circle cx="1197.5" cy="132.1" r="24.6"/><circle cx="1197.5" cy="132.1" r="27.5"/><circle cx="1197.5" cy="132.1" r="30.4"/><circle cx="1197.5" cy="132.1" r="33.3"/><circle cx="1197.5" cy="132.1" r="36.2"/><circle cx="1197.5" cy="132.1" r="39.1"/><circle cx="1197.5" cy="132.1" r="42.0"/><circle cx="1197.5" cy="132.1" r="44.9"/><circle cx="1197.5" cy="132.1" r="47.8"/><circle cx="1197.5" cy="132.1" r="50.7"/></g><clipPath id="w1197b"><rect x="1197.5" y="149.5" width="20.6" height="69.30000000000001"/></clipPath><rect x="1197.5" y="149.5" width="20.6" height="69.30000000000001" fill="#caa682"/><g clip-path="url(#w1197b)" fill="none" stroke="#a4866a" stroke-width=".95"><circle cx="1197.5" cy="184.2" r="1.4"/><circle cx="1197.5" cy="184.2" r="4.3"/><circle cx="1197.5" cy="184.2" r="7.2"/><circle cx="1197.5" cy="184.2" r="10.1"/><circle cx="1197.5" cy="184.2" r="13.0"/><circle cx="1197.5" cy="184.2" r="15.9"/><circle cx="1197.5" cy="184.2" r="18.8"/><circle cx="1197.5" cy="184.2" r="21.7"/><circle cx="1197.5" cy="184.2" r="24.6"/><circle cx="1197.5" cy="184.2" r="27.5"/><circle cx="1197.5" cy="184.2" r="30.4"/><circle cx="1197.5" cy="184.2" r="33.3"/><circle cx="1197.5" cy="184.2" r="36.2"/><circle cx="1197.5" cy="184.2" r="39.1"/><circle cx="1197.5" cy="184.2" r="42.0"/><circle cx="1197.5" cy="184.2" r="44.9"/><circle cx="1197.5" cy="184.2" r="47.8"/><circle cx="1197.5" cy="184.2" r="50.7"/></g><path d="M1197.5 149.5H1218.1" stroke="#6b5a48" stroke-width="1"/><path d="M1218.1 114.6V218.8" stroke="#6b5a48" stroke-width="1"/><path d="M1197.5 114.6V218.8" stroke="#6b5a48" stroke-width=".8"/><rect x="835" y="218.8" width="388" height="4.399999999999977" fill="#dcdcdc"/><rect x="926.6" y="220.0" width="2" height="1" fill="#999"/><rect x="1020.8" y="220.0" width="1" height="1" fill="#999"/><rect x="990.8" y="221.8" width="1" height="1" fill="#999"/><rect x="921.1" y="221.0" width="1.5" height="1" fill="#999"/><rect x="1137.5" y="221.6" width="1.5" height="1" fill="#999"/><rect x="918.2" y="221.8" width="1.5" height="1" fill="#999"/><rect x="1145.6" y="220.2" width="1.5" height="1" fill="#999"/><rect x="947.4" y="221.7" width="1.5" height="1" fill="#999"/><rect x="868.6" y="221.1" width="2" height="1" fill="#999"/><rect x="1031.3" y="220.2" width="2" height="1" fill="#999"/><rect x="943.6" y="221.9" width="1.5" height="1" fill="#999"/><rect x="837.8" y="220.4" width="1.5" height="1" fill="#999"/><rect x="1164.0" y="220.9" width="2" height="1" fill="#999"/><rect x="999.4" y="220.4" width="2" height="1" fill="#999"/><rect x="897.6" y="220.5" width="1" height="1" fill="#999"/><rect x="866.5" y="220.8" width="1.5" height="1" fill="#999"/><rect x="1036.3" y="221.2" width="1.5" height="1" fill="#999"/><rect x="891.3" y="221.3" width="1" height="1" fill="#999"/><rect x="995.2" y="220.2" width="2" height="1" fill="#999"/><rect x="942.2" y="220.6" width="1.5" height="1" fill="#999"/><rect x="1081.2" y="220.2" width="1.5" height="1" fill="#999"/><rect x="874.2" y="219.9" width="1" height="1" fill="#999"/><rect x="942.7" y="221.1" width="1" height="1" fill="#999"/><rect x="882.4" y="221.9" width="1.5" height="1" fill="#999"/><rect x="1013.1" y="219.9" width="1" height="1" fill="#999"/><rect x="1182.6" y="221.9" width="1.5" height="1" fill="#999"/><rect x="842.1" y="220.4" width="1" height="1" fill="#999"/><rect x="1135.8" y="220.7" width="1" height="1" fill="#999"/><rect x="948.8" y="220.2" width="2" height="1" fill="#999"/><rect x="948.3" y="220.4" width="1" height="1" fill="#999"/><rect x="963.5" y="219.8" width="1" height="1" fill="#999"/><rect x="1011.5" y="220.6" width="1.5" height="1" fill="#999"/><rect x="1221.9" y="221.1" width="2" height="1" fill="#999"/><rect x="1215.9" y="220.7" width="1" height="1" fill="#999"/><rect x="879.1" y="219.9" width="1" height="1" fill="#999"/><rect x="1066.1" y="221.9" width="1" height="1" fill="#999"/><rect x="1046.9" y="221.1" width="1.5" height="1" fill="#999"/><rect x="1222.1" y="220.1" width="1.5" height="1" fill="#999"/><rect x="1135.2" y="220.7" width="1" height="1" fill="#999"/><rect x="1020.4" y="220.3" width="2" height="1" fill="#999"/><rect x="1025.9" y="220.3" width="2" height="1" fill="#999"/><rect x="931.5" y="221.8" width="1" height="1" fill="#999"/><rect x="1028.4" y="219.9" width="1.5" height="1" fill="#999"/><rect x="933.3" y="221.0" width="1" height="1" fill="#999"/><rect x="996.8" y="220.4" width="1.5" height="1" fill="#999"/><rect x="854.9" y="221.8" width="1" height="1" fill="#999"/><rect x="1219.3" y="220.7" width="1" height="1" fill="#999"/><rect x="1026.8" y="220.0" width="1" height="1" fill="#999"/><rect x="1195.8" y="221.1" width="1" height="1" fill="#999"/><rect x="965.6" y="221.2" width="1.5" height="1" fill="#999"/><rect x="1151.2" y="221.0" width="1.5" height="1" fill="#999"/><rect x="966.3" y="220.7" width="2" height="1" fill="#999"/><rect x="863.9" y="221.9" width="1" height="1" fill="#999"/><rect x="852.3" y="221.8" width="1" height="1" fill="#999"/><rect x="1132.5" y="220.4" width="1" height="1" fill="#999"/><rect x="1172.6" y="221.3" width="2" height="1" fill="#999"/><rect x="1055.9" y="221.4" width="2" height="1" fill="#999"/><rect x="919.8" y="219.8" width="1" height="1" fill="#999"/><rect x="840.1" y="221.7" width="1" height="1" fill="#999"/><rect x="988.6" y="221.5" width="2" height="1" fill="#999"/><rect x="1175.6" y="221.0" width="1" height="1" fill="#999"/><rect x="897.8" y="221.1" width="2" height="1" fill="#999"/><rect x="1190.1" y="220.8" width="1" height="1" fill="#999"/><rect x="848.3" y="221.1" width="2" height="1" fill="#999"/><rect x="1052.6" y="220.4" width="1" height="1" fill="#999"/><rect x="851.1" y="220.0" width="1" height="1" fill="#999"/><rect x="950.2" y="220.6" width="1" height="1" fill="#999"/><rect x="868.0" y="221.0" width="2" height="1" fill="#999"/><rect x="914.7" y="221.9" width="2" height="1" fill="#999"/><rect x="925.7" y="220.9" width="2" height="1" fill="#999"/><path d="M835 218.8H1223" stroke="#4a4a3a" stroke-width="1.2"/><path d="M835 223.5H1223" stroke="#555" stroke-width="1.2"/><path d="M835 115H1223" stroke="#1565c8" stroke-width="2.200"/><path d="M795.500 114.500V223.500" stroke="#333" stroke-width=".8" fill="none"/><path d="M790.500 114.500H800.500M790.500 218.700H800.500" stroke="#222" stroke-width="1.200" fill="none"/><path d="M790.500 149.500H800.500M790.500 223.500H800.500" stroke="#777" stroke-width="1" fill="none"/><text x="812" y="138" font-size="13.500" fill="#8a8a8a" stroke="#8a8a8a" text-anchor="middle">100</text><text x="812" y="190" font-size="13.500" fill="#8a8a8a" stroke="#8a8a8a" text-anchor="middle">200</text><text transform="translate(788.200 170.800) rotate(-90)" font-size="13" fill="#8a8a8a" stroke="#8a8a8a" text-anchor="middle">313,1</text><path d="M878 253.800H1197.500M878.500 248.500V258.500M898.500 248.500V258.500M1197.500 248.500V258.500" stroke="#444" stroke-width=".9" fill="none"/><text x="888" y="269" font-size="13.500" fill="#8a8a8a" stroke="#8a8a8a" text-anchor="middle">60</text><text x="1047.500" y="269" font-size="13.500" fill="#8a8a8a" stroke="#8a8a8a" text-anchor="middle">860</text><text x="1047.500" y="109" font-size="14" fill="#8a8a8a" stroke="#8a8a8a" text-anchor="middle">Außen</text><text x="1047.500" y="240.700" font-size="14" fill="#8a8a8a" stroke="#8a8a8a" text-anchor="middle">Innen</text><text x="1196" y="240.700" font-size="14" fill="#c4c4c4">ubakus.de</text><rect x="1043.800" y="111.200" width="7.800" height="7.800" fill="#e6e9ee" stroke="#2e7cc0" stroke-width="1.200"/><circle cx="1068" cy="115.3" r="9.900" fill="#fff" stroke="#333" stroke-width="1"/><text x="1068" y="120.3" font-size="14.500" fill="#1a1a1a" text-anchor="middle">5</text><circle cx="1047.7" cy="132.5" r="9.900" fill="#fff" stroke="#333" stroke-width="1"/><text x="1047.7" y="137.5" font-size="14.500" fill="#1a1a1a" text-anchor="middle">4</text><circle cx="1047.7" cy="184.3" r="9.900" fill="#fff" stroke="#333" stroke-width="1"/><text x="1047.7" y="189.3" font-size="14.500" fill="#1a1a1a" text-anchor="middle">3</text><circle cx="1047.7" cy="219.8" r="9.900" fill="#fff" stroke="#333" stroke-width="1"/><text x="1047.7" y="224.8" font-size="14.500" fill="#1a1a1a" text-anchor="middle">2</text><circle cx="1027" cy="222" r="9.900" fill="#fff" stroke="#333" stroke-width="1"/><text x="1027" y="227" font-size="14.500" fill="#1a1a1a" text-anchor="middle">1</text></svg>
<div id="bottom" class="abs"></div>
<div class="abs" style="left:92.700px;top:509px;width:0;height:0;border-left:6.300px solid transparent;border-right:6.300px solid transparent;border-top:10.300px solid #f0f0f0"></div>
<div class="bl" style="left:184px;top:505px;font-size:21px;line-height:26px">U-Wert: <span style="font-size:25px">0,132</span> <span style="font-size:14px">W/(m²K)</span></div>
<svg style="left:395px;top:508px" width="20" height="20" viewBox="0 0 20 20"><path d="M6.500 7L16.300 16.300" stroke="#b4b4b4" stroke-width="3.200" stroke-linecap="round" fill="none"/><circle cx="5.600" cy="6.300" r="4" fill="#b4b4b4"/><path d="M5 5.700L1 1.700" stroke="#545454" stroke-width="3.200" fill="none"/></svg>
<div class="bar" style="left:185px;top:538px;width:231px;height:16px"><s></s><b style="width:30px;height:10px;background-color:#8fd65c"></b><u style="background:linear-gradient(rgba(72,72,72,.6) 1px,rgba(72,72,72,0) 1px),linear-gradient(90deg,#68a050 0,#68a050 24.500%,#b01c1c 24.700%,#b01c1c 100%)"></u><em></em></div>
<div class="bl" style="left:184px;top:558.5px;">GEG 2020 Bestand U ≤ 0.24</div>
<div class="abs" style="left:355px;top:558px;width:15px;height:15px;background:#cfcfcf;border:1px solid #e6e6e6"></div><div class="abs" style="left:358px;top:561px;width:0;height:0;border-left:4.500px solid transparent;border-right:4.500px solid transparent;border-top:9px solid #333"></div>
<div class="bl" style="left:184px;top:585.5px;">Beitrag zum Treibhauseffekt:</div>
<div class="bar" style="left:185px;top:602.5px;width:231px;height:12px"><s></s><b style="width:43px;height:6px;background-color:#8fd65c"></b><u style="background:linear-gradient(rgba(72,72,72,.6) 1px,rgba(72,72,72,0) 1px),linear-gradient(90deg,#68a050 0,#68a050 55%,#c8a428 80%,#b01c1c 97%,#b01c1c 100%)"></u><em></em></div>
<div class="bs" style="left:184px;top:622px;">sehr gut</div>
<div class="bs" style="right:807px;top:622px;">mangelhaft</div>
<div class="bl" style="left:436px;top:505.5px;">Tauwasser: 0 kg/m²</div>
<div class="bar" style="left:437px;top:523px;width:231px;height:12px"><s></s><b style="width:2px;height:6px;background-color:#8fd65c"></b><u style="background:linear-gradient(rgba(72,72,72,.6) 1px,rgba(72,72,72,0) 1px),linear-gradient(90deg,#68a050 0,#68a050 50%,#c8a428 78%,#b01c1c 97%,#b01c1c 100%)"></u><em></em></div>
<div class="bl" style="left:436px;top:545.5px;">Holzfeuchte: +0,0 %</div>
<div class="bar" style="left:437px;top:563px;width:231px;height:12px"><s></s><b style="width:2px;height:6px;background-color:#8fd65c"></b><u style="background:linear-gradient(rgba(72,72,72,.6) 1px,rgba(72,72,72,0) 1px),linear-gradient(90deg,#68a050 0,#68a050 22%,#c8a428 35%,#b01c1c 52%,#b01c1c 100%)"></u><em></em></div>
<div class="bl" style="left:436px;top:585.5px;">Trocknungsdauer: -</div>
<div class="bar" style="left:437px;top:602.5px;width:231px;height:12px"><s></s><b style="width:2px;height:6px;background-color:#8fd65c"></b><u style="background:linear-gradient(rgba(72,72,72,.6) 1px,rgba(72,72,72,0) 1px),linear-gradient(90deg,#68a050 0,#68a050 40%,#c8a428 62%,#b01c1c 88%,#b01c1c 100%)"></u><em></em></div>
<div class="bs" style="left:436px;top:622px;">sehr gut</div>
<div class="bs" style="right:555px;top:622px;">mangelhaft</div>
<div class="bl" style="left:688px;top:505.5px;">sd-Wert: 102 m</div>
<div class="bl" style="right:303px;top:505.5px;">Dicke: 31,31 cm</div>
<div class="bl" style="right:303px;top:523.5px;">Gewicht: 23 kg/m²</div>
<div class="bl" style="left:688px;top:543.5px;">Oberfläche innen: 19,3°C (52%)</div>
<div class="bar" style="left:689px;top:561.5px;width:231px;height:12px"><s></s><b style="width:111px;height:6px;background-color:#8fd65c"></b><u style="background:linear-gradient(rgba(72,72,72,.6) 1px,rgba(72,72,72,0) 1px),linear-gradient(90deg,#b01c1c 0,#b01c1c 14%,#c8a428 24%,#68a050 42%,#68a050 100%)"></u><em></em></div>
<div class="bl" style="left:688px;top:583.5px;">Trocknungsreserve: 904 g/m²a</div>
<div class="bar" style="left:689px;top:601px;width:231px;height:12px"><s></s><b style="width:231px;height:6px;background-color:#8fd65c"></b><u style="background:linear-gradient(rgba(72,72,72,.6) 1px,rgba(72,72,72,0) 1px),linear-gradient(90deg,#b01c1c 0,#b01c1c 44%,#c8a428 51%,#68a050 58%,#68a050 100%)"></u><em></em></div>
<div class="bs" style="left:688px;top:620px;">mangelhaft</div>
<div class="bs" style="right:303px;top:620px;">sehr gut</div>
<div class="bl" style="left:940px;top:505.5px;">Temp.Ampl.Dämpfung (1/TAV): 6,6</div>
<div class="bar" style="left:941px;top:523px;width:231px;height:12px"><s></s><b style="width:77px;height:6px;background-color:#b6d642"></b><u style="background:linear-gradient(rgba(72,72,72,.6) 1px,rgba(72,72,72,0) 1px),linear-gradient(90deg,#b01c1c 0,#b01c1c 2%,#c8a428 16%,#68a050 45%,#68a050 100%)"></u><em></em></div>
<div class="bl" style="left:940px;top:545.5px;">Phasenverschiebung: 7,2 h</div>
<div class="bar" style="left:941px;top:563px;width:231px;height:12px"><s></s><b style="width:93px;height:6px;background-color:#aed646"></b><u style="background:linear-gradient(rgba(72,72,72,.6) 1px,rgba(72,72,72,0) 1px),linear-gradient(90deg,#b01c1c 0,#b01c1c 2%,#c8a428 16%,#68a050 45%,#68a050 100%)"></u><em></em></div>
<div class="bl" style="left:940px;top:585.5px;">Speicherfähigkeit innen: 17.8 kJ/m²K</div>
<div class="bar" style="left:941px;top:602.5px;width:231px;height:12px"><s></s><b style="width:41px;height:6px;background-color:#e29c2a"></b><u style="background:linear-gradient(rgba(72,72,72,.6) 1px,rgba(72,72,72,0) 1px),linear-gradient(90deg,#b01c1c 0,#b01c1c 2%,#c8a428 16%,#68a050 45%,#68a050 100%)"></u><em></em></div>
<div class="bs" style="left:940px;top:622px;">mangelhaft</div>
<div class="bs" style="right:51px;top:622px;">sehr gut</div>
</div>
</body>
</html>
